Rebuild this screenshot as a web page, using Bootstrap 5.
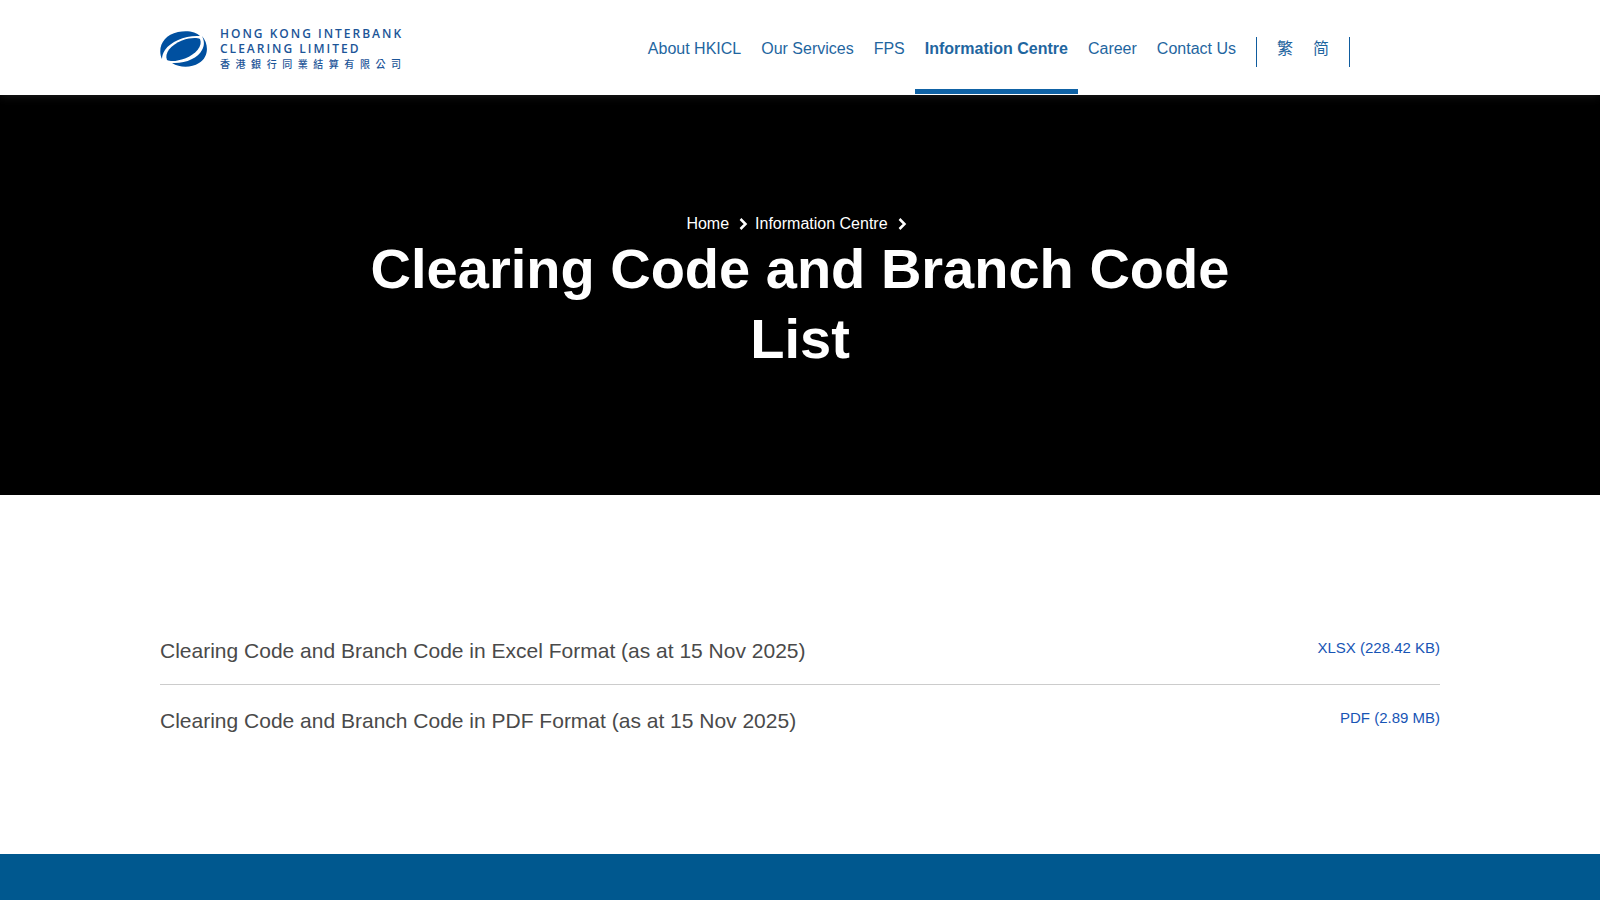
<!DOCTYPE html>
<html lang="en">
<head>
<meta charset="utf-8">
<meta name="viewport" content="width=device-width, initial-scale=1">
<title>Clearing Code and Branch Code List - HKICL</title>
<link href="https://cdn.jsdelivr.net/npm/bootstrap@5.3.0/dist/css/bootstrap.min.css" rel="stylesheet">
<style>
body { font-family: "Liberation Sans", "Noto Sans CJK TC", sans-serif; font-size: 16px; line-height: 24px; color: #4a4a4a; }
a { text-decoration: none; }
.wrap { width: 80%; margin: 0 auto; }
.site-header { position: relative; z-index: 2; height: 95px; box-shadow: 0 0 10px rgba(110, 110, 110, .3); }
.brand-logo { color: #1c5598; gap: 12px; padding-top: 26px; }
.brand-mark { width: 48px; height: 44px; margin-top: 2px; }
.brand-en { font: 600 12px/15px "Open Sans", "Noto Sans", sans-serif; letter-spacing: 2px; white-space: nowrap; }
.brand-zh { font: 500 10px/15px "Noto Sans CJK TC", sans-serif; width: 181px; text-align-last: justify; }
.main-nav { margin-right: 90px; }
.main-nav .nav-link { color: #1f669f; padding: 37px 10px 0; line-height: 24px; border-bottom: 5px solid transparent; height: 94px; }
.main-nav .nav-link.active { font-weight: 700; border-color: #0f62a5; }
.lang-list { margin-left: 10px; }
.lang-list::before, .lang-list::after { content: ""; flex: none; width: 1px; height: 30px; margin-top: 37px; background: #0f5c9e; }
.lang-list .nav-item:first-child { margin-left: 10px; }
.lang-list .nav-item:last-child { margin-right: 10px; }
.hero { background: #000; color: #fff; min-height: 400px; padding-top: 117px; }
.crumbs { line-height: 22px; }
.crumbs a { color: #fff; line-height: 24px; height: 22px; }
.crumbs svg { width: 9px; height: 12px; margin: 2px 7px 0 10px; }
.hero h1 { font-size: 56px; line-height: 70px; font-weight: 700; max-width: 960px; }
.downloads { padding: 120px 0 90px; }
.file-row { padding: 22px 0 19px; font-size: 21px; line-height: 28px; }
.file-row + .file-row { border-top: 1px solid #ccc; }
.file-row a { color: #1755b5; font-size: 15px; line-height: 22px; }
.site-footer { background: #00588f; min-height: 46px; }
</style>
</head>
<body class="d-flex flex-column min-vh-100">
<header class="site-header bg-white">
  <div class="wrap d-flex justify-content-between">
    <a class="brand-logo d-flex" href="#" aria-label="Hong Kong Interbank Clearing Limited">
      <svg class="brand-mark" viewBox="0 0 48 44" fill="#0050a0" aria-hidden="true">
        <path d="M2 31C-3 20 3 7 18 4C28 2 36 4 40 8C26 7 11 13 5 22C3 25 2 28 2 31Z"/>
        <path d="M42 8C49 16 49 29 39 35C31 40 20 40 12 35C25 36 38 30 42 22C45 17 44 12 42 8Z"/>
        <path d="M7 32C4 25 11 17 22 12.500C30 9.500 37 9.500 40 11C43 18 36 26 25 30.500C18 33 11 34 7 32Z"/>
      </svg>
      <span>
        <span class="brand-en d-block">HONG KONG INTERBANK<br>CLEARING LIMITED</span>
        <span class="brand-zh d-block" lang="zh-Hant">香港銀行同業結算有限公司</span>
      </span>
    </a>
    <nav class="main-nav d-flex" aria-label="Main">
      <ul class="nav flex-nowrap">
        <li class="nav-item"><a class="nav-link" href="#">About HKICL</a></li>
        <li class="nav-item"><a class="nav-link" href="#">Our Services</a></li>
        <li class="nav-item"><a class="nav-link" href="#">FPS</a></li>
        <li class="nav-item"><a class="nav-link active" aria-current="page" href="#">Information Centre</a></li>
        <li class="nav-item"><a class="nav-link" href="#">Career</a></li>
        <li class="nav-item"><a class="nav-link" href="#">Contact Us</a></li>
      </ul>
      <ul class="nav lang-list flex-nowrap">
        <li class="nav-item"><a class="nav-link" href="#" lang="zh-Hant">繁</a></li>
        <li class="nav-item"><a class="nav-link" href="#" lang="zh-Hans">简</a></li>
      </ul>
    </nav>
  </div>
</header>
<main class="flex-grow-1">
  <section class="hero text-center">
    <nav class="crumbs d-flex justify-content-center align-items-center" aria-label="Breadcrumb">
      <a href="#">Home</a>
      <svg viewBox="0 0 9 12" fill="none" stroke="#fff" stroke-width="2.500" aria-hidden="true"><path d="M1.500 1L6.500 6L1.500 11"/></svg>
      <a href="#">Information Centre</a>
      <svg viewBox="0 0 9 12" fill="none" stroke="#fff" stroke-width="2.500" aria-hidden="true"><path d="M1.500 1L6.500 6L1.500 11"/></svg>
    </nav>
    <h1 class="mx-auto mb-0">Clearing Code and Branch Code List</h1>
  </section>
  <section class="wrap downloads">
    <div class="file-row d-flex justify-content-between align-items-start">
      <span>Clearing Code and Branch Code in Excel Format (as at 15 Nov 2025)</span>
      <a href="#">XLSX (228.42 KB)</a>
    </div>
    <div class="file-row d-flex justify-content-between align-items-start">
      <span>Clearing Code and Branch Code in PDF Format (as at 15 Nov 2025)</span>
      <a href="#">PDF (2.89 MB)</a>
    </div>
  </section>
</main>
<footer class="site-footer"></footer>
<script src="https://cdn.jsdelivr.net/npm/bootstrap@5.3.0/dist/js/bootstrap.bundle.min.js"></script>
</body>
</html>
